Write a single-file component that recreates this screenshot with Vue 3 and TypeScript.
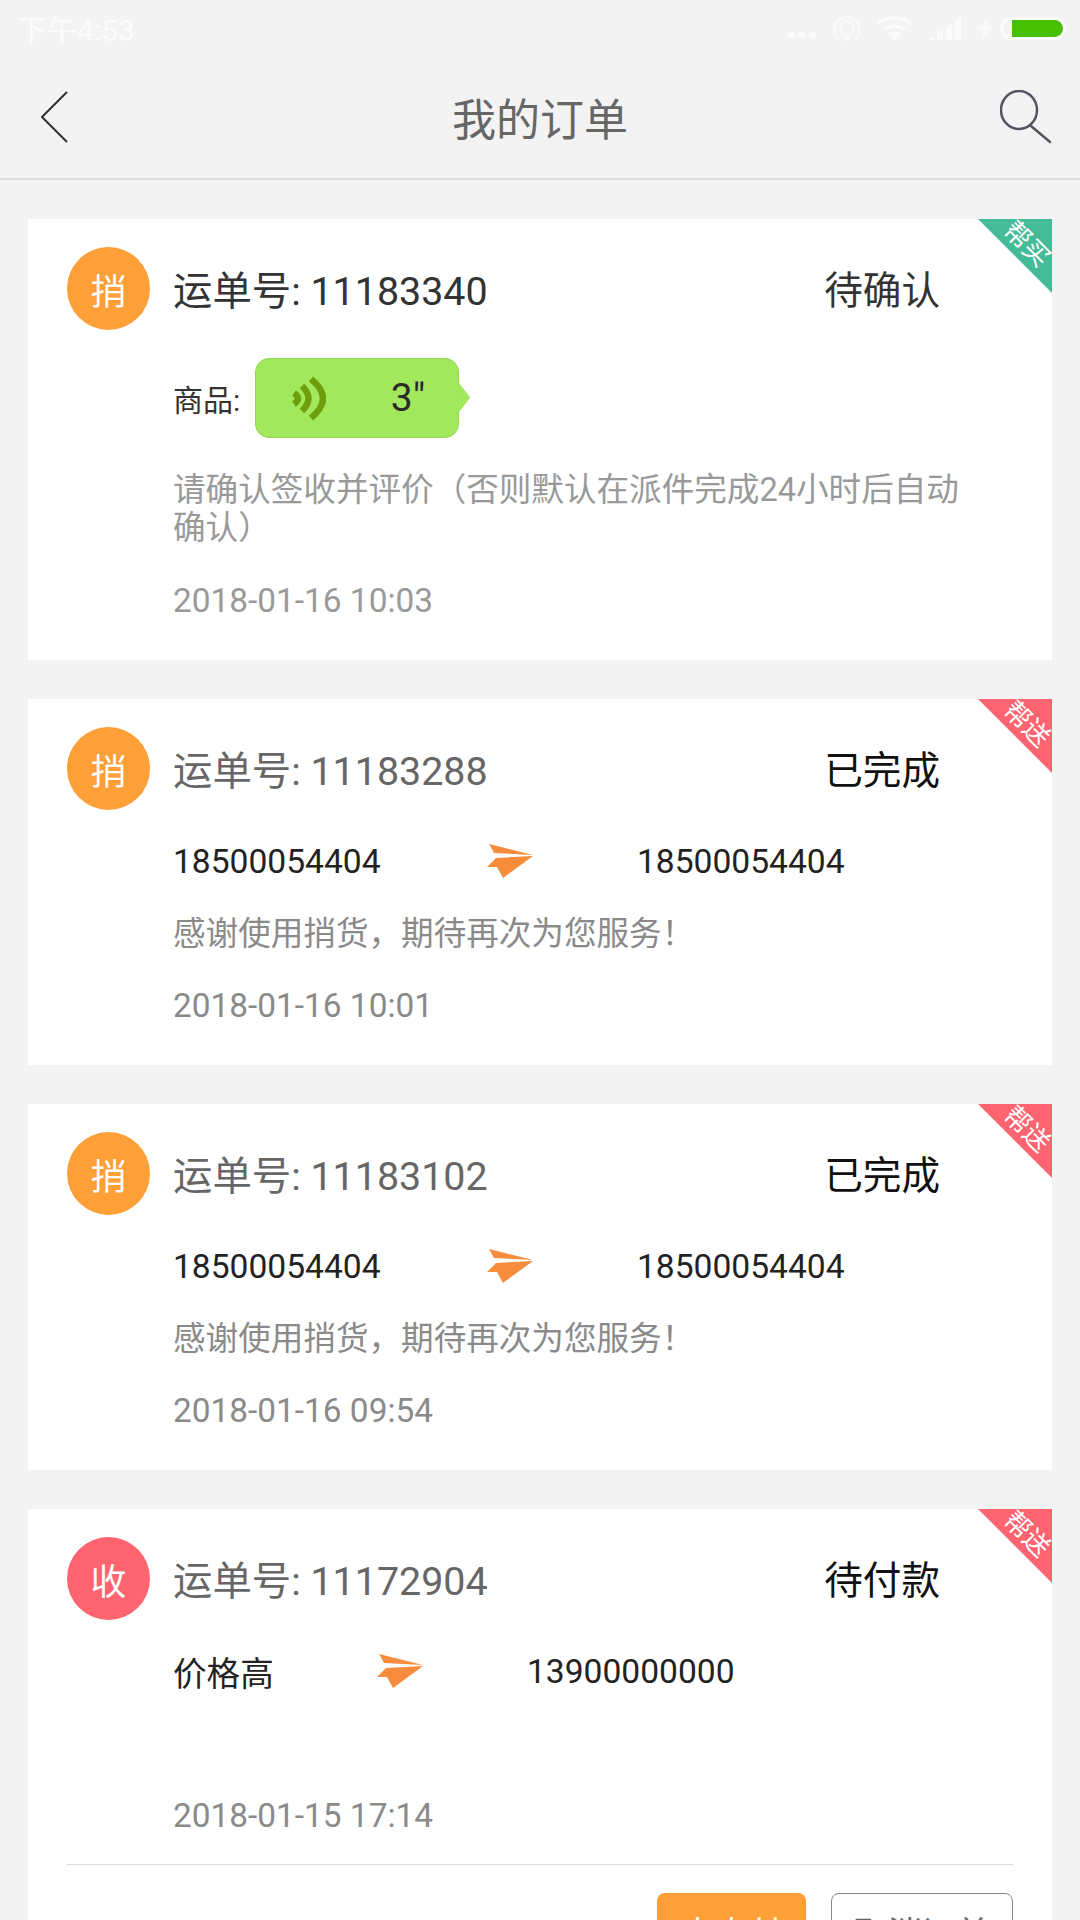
<script setup lang="ts">
interface Order {
  id: string;
  avatar: string;
  avatarColor: string;
  status: string;
  tag: string;
  time: string;
  from?: string;
  to?: string;
  note?: string;
  muted?: boolean;
  voice?: boolean;
  actions?: boolean;
}

const orange = "#ff9f38";
const red = "#ff6470";

const orders: Order[] = [
  {
    id: "11183340",
    avatar: "捎",
    avatarColor: orange,
    status: "待确认",
    tag: "帮买",
    time: "2018-01-16 10:03",
    voice: true,
    note: "请确认签收并评价（否则默认在派件完成24小时后自动确认）",
  },
  {
    id: "11183288",
    avatar: "捎",
    avatarColor: orange,
    status: "已完成",
    tag: "帮送",
    time: "2018-01-16 10:01",
    from: "18500054404",
    to: "18500054404",
    note: "感谢使用捎货，期待再次为您服务！",
    muted: true,
  },
  {
    id: "11183102",
    avatar: "捎",
    avatarColor: orange,
    status: "已完成",
    tag: "帮送",
    time: "2018-01-16 09:54",
    from: "18500054404",
    to: "18500054404",
    note: "感谢使用捎货，期待再次为您服务！",
    muted: true,
  },
  {
    id: "11172904",
    avatar: "收",
    avatarColor: red,
    status: "待付款",
    tag: "帮送",
    time: "2018-01-15 17:14",
    from: "价格高",
    to: "13900000000",
    muted: true,
    actions: true,
  },
];
</script>

<template>
  <div class="page">
    <div class="statusbar">
      <span class="clock">下午4:53</span>
      <div class="status-icons">
        <svg class="dots" width="30" height="8" viewBox="0 0 30 8" fill="#fbfbfb"><circle cx="4" cy="4" r="3.5" /><circle cx="15" cy="4" r="3.5" /><circle cx="26" cy="4" r="3.5" /></svg>
        <svg width="28" height="26" viewBox="0 0 28 26" fill="none" stroke="#f9f9f9" stroke-width="2.5"><path d="M6 24a12.5 12.5 0 1 1 16 0" /><circle cx="14" cy="13" r="6.5" /><path d="M14 18l4 8h-8z" fill="#f9f9f9" stroke="none" /></svg>
        <svg width="35" height="25" viewBox="0 0 35 25" fill="none" stroke="#fbfbfb" stroke-width="3.5"><path d="M1 8c9-8 24-8 33 0M7 14c6-5 15-5 21 0M12 19c3-2 8-2 11 0" /><circle cx="17.5" cy="22" r="2.8" fill="#fbfbfb" stroke="none" /></svg>
        <svg width="34" height="24" viewBox="0 0 34 24" fill="#fbfbfb"><path d="M0 24l6-4v4zM9 18l6-5v11H9zM18 11l6-4v17h-6zM27 4l6-4v24h-6z" /></svg>
        <svg width="15" height="25" viewBox="0 0 15 25" fill="#f9f9f9"><path d="M10 0L0 14h6L3 25l12-16H9z" /></svg>
        <div class="battery"><div class="battery-fill"></div></div>
      </div>
    </div>

    <header class="navbar">
      <svg width="27" height="52" viewBox="0 0 27 52" fill="none" stroke="#333" stroke-width="2"><path d="M26 1L1 26l25 25" /></svg>
      <h1 class="nav-title">我的订单</h1>
      <svg width="52" height="54" viewBox="0 0 52 54" fill="none" stroke="#55555f" stroke-width="2.5"><ellipse cx="19" cy="20" rx="18" ry="19" /><path d="M31 36l19 16" stroke-linecap="round" /></svg>
    </header>

    <main class="list">
      <article v-for="order in orders" :key="order.id" class="card">
        <div class="corner" :class="order.tag === '帮买' ? 'corner-buy' : 'corner-send'">
          <span>{{ order.tag }}</span>
        </div>

        <div class="head">
          <div class="avatar" :style="{ backgroundColor: order.avatarColor }">{{ order.avatar }}</div>
          <div class="order-id" :class="{ muted: order.muted }">运单号: {{ order.id }}</div>
          <div class="status" :class="{ done: order.muted }">{{ order.status }}</div>
        </div>

        <div class="body" :class="{ 'body-muted': order.muted }">
          <div v-if="order.voice" class="goods">
            <span class="goods-label">商品:</span>
            <div class="bubble">
              <svg width="34" height="45" viewBox="0 0 34 45" fill="none" stroke="#6f9e0d" stroke-width="6.5"><path d="M2 17Q10 22.5 2 28M10 10Q23 22.5 10 35M19 3Q43 22.5 19 42" /></svg>
              <span class="bubble-time">3"</span>
            </div>
          </div>

          <div v-else class="route" :class="{ 'route-short': order.actions }">
            <span class="route-from">{{ order.from }}</span>
            <svg class="plane" width="47" height="35" viewBox="0 0 47 35" fill="#f68c3c"><path d="M2 0L46 11 7 9zM46 12L16 34 10 23H0L9 14z" /></svg>
            <span>{{ order.to }}</span>
          </div>

          <p v-if="order.note" class="note">{{ order.note }}</p>
          <p class="time" :class="{ 'time-far': !order.note }">{{ order.time }}</p>
        </div>

        <div v-if="order.actions" class="actions">
          <button class="btn btn-pay">去支付</button>
          <button class="btn btn-cancel">取消订单</button>
        </div>
      </article>
    </main>
  </div>
</template>

<style>
html,
body {
  margin: 0;
  background: #f3f3f3;
}
</style>

<style scoped>
.page {
  width: 1080px;
  height: 1920px;
  overflow: hidden;
  background: #f3f3f3;
  font-family: Roboto, "Noto Sans CJK SC", sans-serif;
}

.statusbar {
  height: 56px;
  display: flex;
  align-items: center;
  justify-content: space-between;
  padding: 0 14px 0 17px;
}

.clock {
  font-size: 30px;
  color: #fbfbfb;
}

.status-icons {
  display: flex;
  align-items: center;
  gap: 16px;
}

.dots {
  margin-top: 14px;
}

.battery {
  width: 66px;
  height: 23px;
  box-sizing: border-box;
  margin-left: -9px;
  border: 3px solid #fbfbfb;
  border-radius: 12px;
  display: flex;
  justify-content: flex-end;
}

.battery-fill {
  width: 51px;
  height: 100%;
  background: #46c000;
  border-radius: 0 9px 9px 0;
}

.navbar {
  height: 122px;
  display: flex;
  align-items: center;
  padding: 0 28px 0 41px;
  border-bottom: 2px solid #dedede;
}

.nav-title {
  flex: 1;
  margin: 0 0 0 12px;
  text-align: center;
  font-size: 44px;
  font-weight: 400;
  color: #666;
}

.list {
  display: flex;
  flex-direction: column;
  gap: 39px;
  padding: 39px 28px 0;
}

.card {
  position: relative;
  flex-shrink: 0;
  background: #fff;
  padding: 28px 39px 37px;
}

.corner {
  position: absolute;
  top: 0;
  right: 0;
  width: 74px;
  height: 74px;
  clip-path: polygon(0 0, 100% 0, 100% 100%);
}

.corner-buy {
  background: #45bb98;
}

.corner-send {
  background: #ff6470;
}

.corner span {
  position: absolute;
  top: 10px;
  left: 23px;
  font-size: 26px;
  line-height: 30px;
  white-space: nowrap;
  color: #fff;
  transform: rotate(45deg);
}

.head {
  display: flex;
  align-items: center;
  height: 83px;
}

.avatar {
  width: 83px;
  height: 83px;
  flex-shrink: 0;
  border-radius: 50%;
  display: flex;
  align-items: center;
  justify-content: center;
  font-size: 36px;
  color: #fff;
}

.order-id {
  margin-left: 23px;
  padding-bottom: 3px;
  font-size: 39.4px;
  color: #333;
}

.order-id.muted {
  color: #666;
}

.status {
  margin-left: auto;
  margin-right: 73px;
  padding-bottom: 3px;
  font-size: 38.6px;
  color: #333;
}

.status.done {
  color: #111;
}

.body {
  padding-left: 106px;
}

.goods {
  display: flex;
  align-items: center;
  gap: 15px;
  margin-top: 28px;
}

.goods-label {
  font-size: 30px;
  color: #333;
}

.bubble {
  position: relative;
  width: 204px;
  height: 80px;
  box-sizing: border-box;
  display: flex;
  align-items: center;
  justify-content: space-between;
  padding: 0 33px 0 36px;
  background: #a2e85c;
  border: 1px solid #94d655;
  border-radius: 14px;
}

.bubble::after {
  content: "";
  position: absolute;
  top: 23px;
  right: -12px;
  width: 12px;
  height: 31px;
  background: #a2e85c;
  clip-path: polygon(0 0, 100% 50%, 0 100%);
}

.bubble-time {
  font-size: 39px;
  color: #2a2a2a;
}

.route {
  display: flex;
  align-items: center;
  margin-top: 26px;
  height: 50px;
  font-size: 33.6px;
  color: #222;
}

.route-from {
  width: 314px;
}

.route-short .route-from {
  width: 204px;
}

.plane {
  margin-right: 103px;
}

.note {
  margin: 33px 0 0;
  max-width: 800px;
  font-size: 32.6px;
  line-height: 38px;
  color: #999;
}

.time {
  margin: 32px 0 0;
  font-size: 33.4px;
  line-height: 44px;
  color: #999;
}

.body-muted .note {
  margin-top: 29px;
  color: #8a8a8a;
}

.body-muted .time {
  margin-top: 31px;
  color: #8a8a8a;
}

.body-muted .time-far {
  margin-top: 98px;
}

.actions {
  display: flex;
  justify-content: flex-end;
  gap: 25px;
  margin-top: 26px;
  padding-top: 28px;
  border-top: 1px solid #dcdcdc;
}

.card:has(.actions) {
  padding-bottom: 0;
}

.btn {
  height: 76px;
  padding: 0;
  font-family: inherit;
  font-size: 34px;
  border-radius: 8px;
}

.btn-pay {
  width: 149px;
  border: none;
  background: #ff9f38;
  color: #fff;
}

.btn-cancel {
  width: 182px;
  border: 1px solid #888;
  background: #fff;
  color: #666;
}
</style>
